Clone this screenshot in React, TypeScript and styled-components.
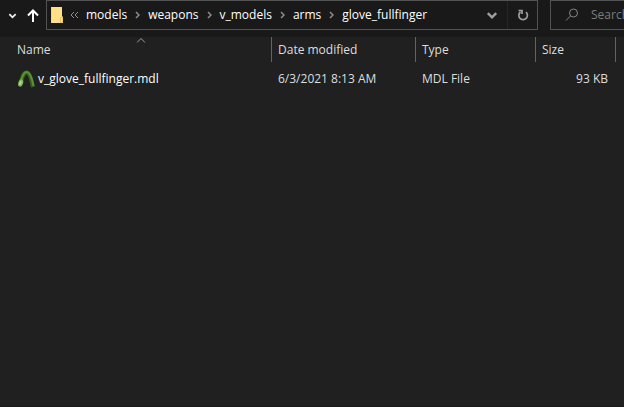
import React from "react";
import styled, { createGlobalStyle } from "styled-components";

const GlobalStyle = createGlobalStyle`
  * { box-sizing: border-box; }
  body {
    margin: 0;
    background: #202020;
    color: #dedede;
    font: 12px/16px "Segoe UI", "Open Sans", "Noto Sans", sans-serif;
  }
  button, input { font: inherit; color: inherit; }
`;

const Window = styled.div`
  display: flex;
  flex-direction: column;
  min-height: 100vh;
  border-bottom: 1px solid #191919;
`;

const Toolbar = styled.header`
  display: flex;
  align-items: flex-start;
  height: 37px;
  background: #191919;
`;

const IconButton = styled.button<{ $width: number }>`
  display: flex;
  flex: none;
  align-items: center;
  justify-content: center;
  width: ${(p) => p.$width}px;
  height: 30px;
  padding: 0;
  border: 0;
  background: none;
`;

const AddressBar = styled.div`
  display: flex;
  flex: 1;
  align-items: center;
  height: 30px;
  min-width: 0;
  margin-left: 4px;
  padding-left: 3px;
  border: 1px solid #535353;
`;

const Crumbs = styled.nav`
  display: flex;
  flex: 1;
  align-items: center;
  min-width: 0;
  margin-left: 6px;
`;

const Crumb = styled.a`
  color: #fff;
  text-decoration: none;
  white-space: nowrap;
`;

const Separator = styled.svg`
  flex: none;
  margin: 0 8px;
`;

const Refresh = styled(IconButton)`
  height: 28px;
  border-left: 1px solid #262626;
`;

const SearchBox = styled.label`
  display: flex;
  flex: none;
  align-items: center;
  gap: 12px;
  width: 74px;
  height: 30px;
  margin-left: 12px;
  padding-left: 14px;
  border: 1px solid #535353;
  border-right: 0;
`;

const SearchInput = styled.input`
  flex: 1;
  min-width: 0;
  padding: 0;
  border: 0;
  outline: 0;
  background: none;
  &::placeholder { color: #7c7c7c; opacity: 1; }
`;

const FileTable = styled.table`
  width: calc(100% - 19px);
  margin: 0 8px 0 11px;
  table-layout: fixed;
  border-collapse: separate;
  border-spacing: 0;
`;

const HeadCell = styled.th<{ $width?: number }>`
  position: relative;
  width: ${(p) => (p.$width ? `${p.$width}px` : "auto")};
  height: 25px;
  padding: 0 6px;
  border-right: 1px solid #636363;
  font-weight: 400;
  text-align: left;
`;

const SortMark = styled.svg`
  position: absolute;
  top: 1px;
  left: 50%;
  transform: translateX(-50%);
`;

const Cell = styled.td<{ $right?: boolean }>`
  height: 33px;
  padding: 0 8px 0 6px;
  text-align: ${(p) => (p.$right ? "right" : "left")};
  white-space: nowrap;
`;

const FileName = styled.span`
  display: flex;
  align-items: center;
  gap: 3px;
  color: #fff;
`;

const ChevronDown = ({ size, color }: { size: number; color: string }) => (
  <svg width={size} height={size} viewBox="0 0 10 10" fill="none" stroke={color} strokeWidth="2">
    <path d="M1.500 3.500 5 7l3.500-3.500" />
  </svg>
);

const FolderIcon = () => (
  <svg width="14" height="18" viewBox="0 0 14 18">
    <path d="M1 1h11v9l1 1v6H1z" fill="#ffe08a" />
    <path d="M1 1h1v16H1z" fill="#fbd56e" />
    <path d="M10 11h3v6h-3z" fill="#f0c650" />
    <path d="M11 12h1v4h-1z" fill="#ffe596" />
  </svg>
);

const ModelIcon = () => (
  <svg width="18" height="18" viewBox="0 0 18 18" fill="none">
    <path d="M3.500 13C5.500 7 6.500 2.500 9.500 2.500S14 8 16 17" stroke="#34601c" strokeWidth="4" />
    <path d="M3.500 12C5.500 6 6.500 2 9.500 2s5.500 6 7 14" stroke="#5a9433" strokeWidth="1.800" />
    <ellipse cx="3.700" cy="13" rx="2.400" ry="3.800" transform="rotate(18 3.700 13)" fill="#7db85a" />
    <ellipse cx="3.400" cy="13" rx="1.200" ry="2.200" transform="rotate(18 3.400 13)" fill="#addb8c" />
  </svg>
);

const path = ["models", "weapons", "v_models", "arms", "glove_fullfinger"];

const files = [
  { name: "v_glove_fullfinger.mdl", modified: "6/3/2021 8:13 AM", type: "MDL File", size: "93 KB" },
];

export default function App() {
  return (
    <>
      <GlobalStyle />
      <Window>
        <Toolbar>
          <IconButton $width={24} aria-label="Recent locations">
            <ChevronDown size={9} color="#f0f0f0" />
          </IconButton>
          <IconButton $width={18} aria-label="Up">
            <svg width="14" height="16" viewBox="0 0 14 16" fill="none" stroke="#fff" strokeWidth="2">
              <path d="M7 15V4M2 8.500l5-5 5 5" />
            </svg>
          </IconButton>
          <AddressBar>
            <FolderIcon />
            <Crumbs aria-label="Path">
              <svg width="16" height="8" viewBox="0 0 16 8" fill="none" stroke="#909090">
                <path d="M4 1 1 4l3 3M8 1 5 4l3 3" />
              </svg>
              {path.map((part, i) => (
                <React.Fragment key={part}>
                  {i > 0 && (
                    <Separator width="5" height="8" viewBox="0 0 5 8" fill="none" stroke="#8c8c8c" strokeWidth="1.500">
                      <path d="m1 1 3 3-3 3" />
                    </Separator>
                  )}
                  <Crumb href="#">{part}</Crumb>
                </React.Fragment>
              ))}
            </Crumbs>
            <IconButton $width={30} aria-label="Previous locations">
              <ChevronDown size={12} color="#a0a0a0" />
            </IconButton>
            <Refresh $width={30} aria-label="Refresh">
              <svg width="12" height="12" viewBox="0 0 12 12" fill="none" stroke="#a0a0a0" strokeWidth="1.700">
                <path d="M9 3.200A4.300 4.300 0 1 1 3.500 3M1.500 1.500H5v3.500" />
              </svg>
            </Refresh>
          </AddressBar>
          <SearchBox>
            <svg width="14" height="14" viewBox="0 0 14 14" fill="none" stroke="#858585">
              <circle cx="8.500" cy="5" r="4" />
              <path d="M5.500 8 1 12.500" />
            </svg>
            <SearchInput type="text" placeholder="Search glove_fullfinger" aria-label="Search" />
          </SearchBox>
        </Toolbar>
        <FileTable>
          <thead>
            <tr>
              <HeadCell>
                Name
                <SortMark width="9" height="5" viewBox="0 0 9 5" fill="none" stroke="#a0a0a0">
                  <path d="M.5 4.500l4-4 4 4" />
                </SortMark>
              </HeadCell>
              <HeadCell $width={144}>Date modified</HeadCell>
              <HeadCell $width={120}>Type</HeadCell>
              <HeadCell $width={80}>Size</HeadCell>
            </tr>
          </thead>
          <tbody>
            {files.map((file) => (
              <tr key={file.name}>
                <Cell>
                  <FileName>
                    <ModelIcon />
                    {file.name}
                  </FileName>
                </Cell>
                <Cell>{file.modified}</Cell>
                <Cell>{file.type}</Cell>
                <Cell $right>{file.size}</Cell>
              </tr>
            ))}
          </tbody>
        </FileTable>
      </Window>
    </>
  );
}
